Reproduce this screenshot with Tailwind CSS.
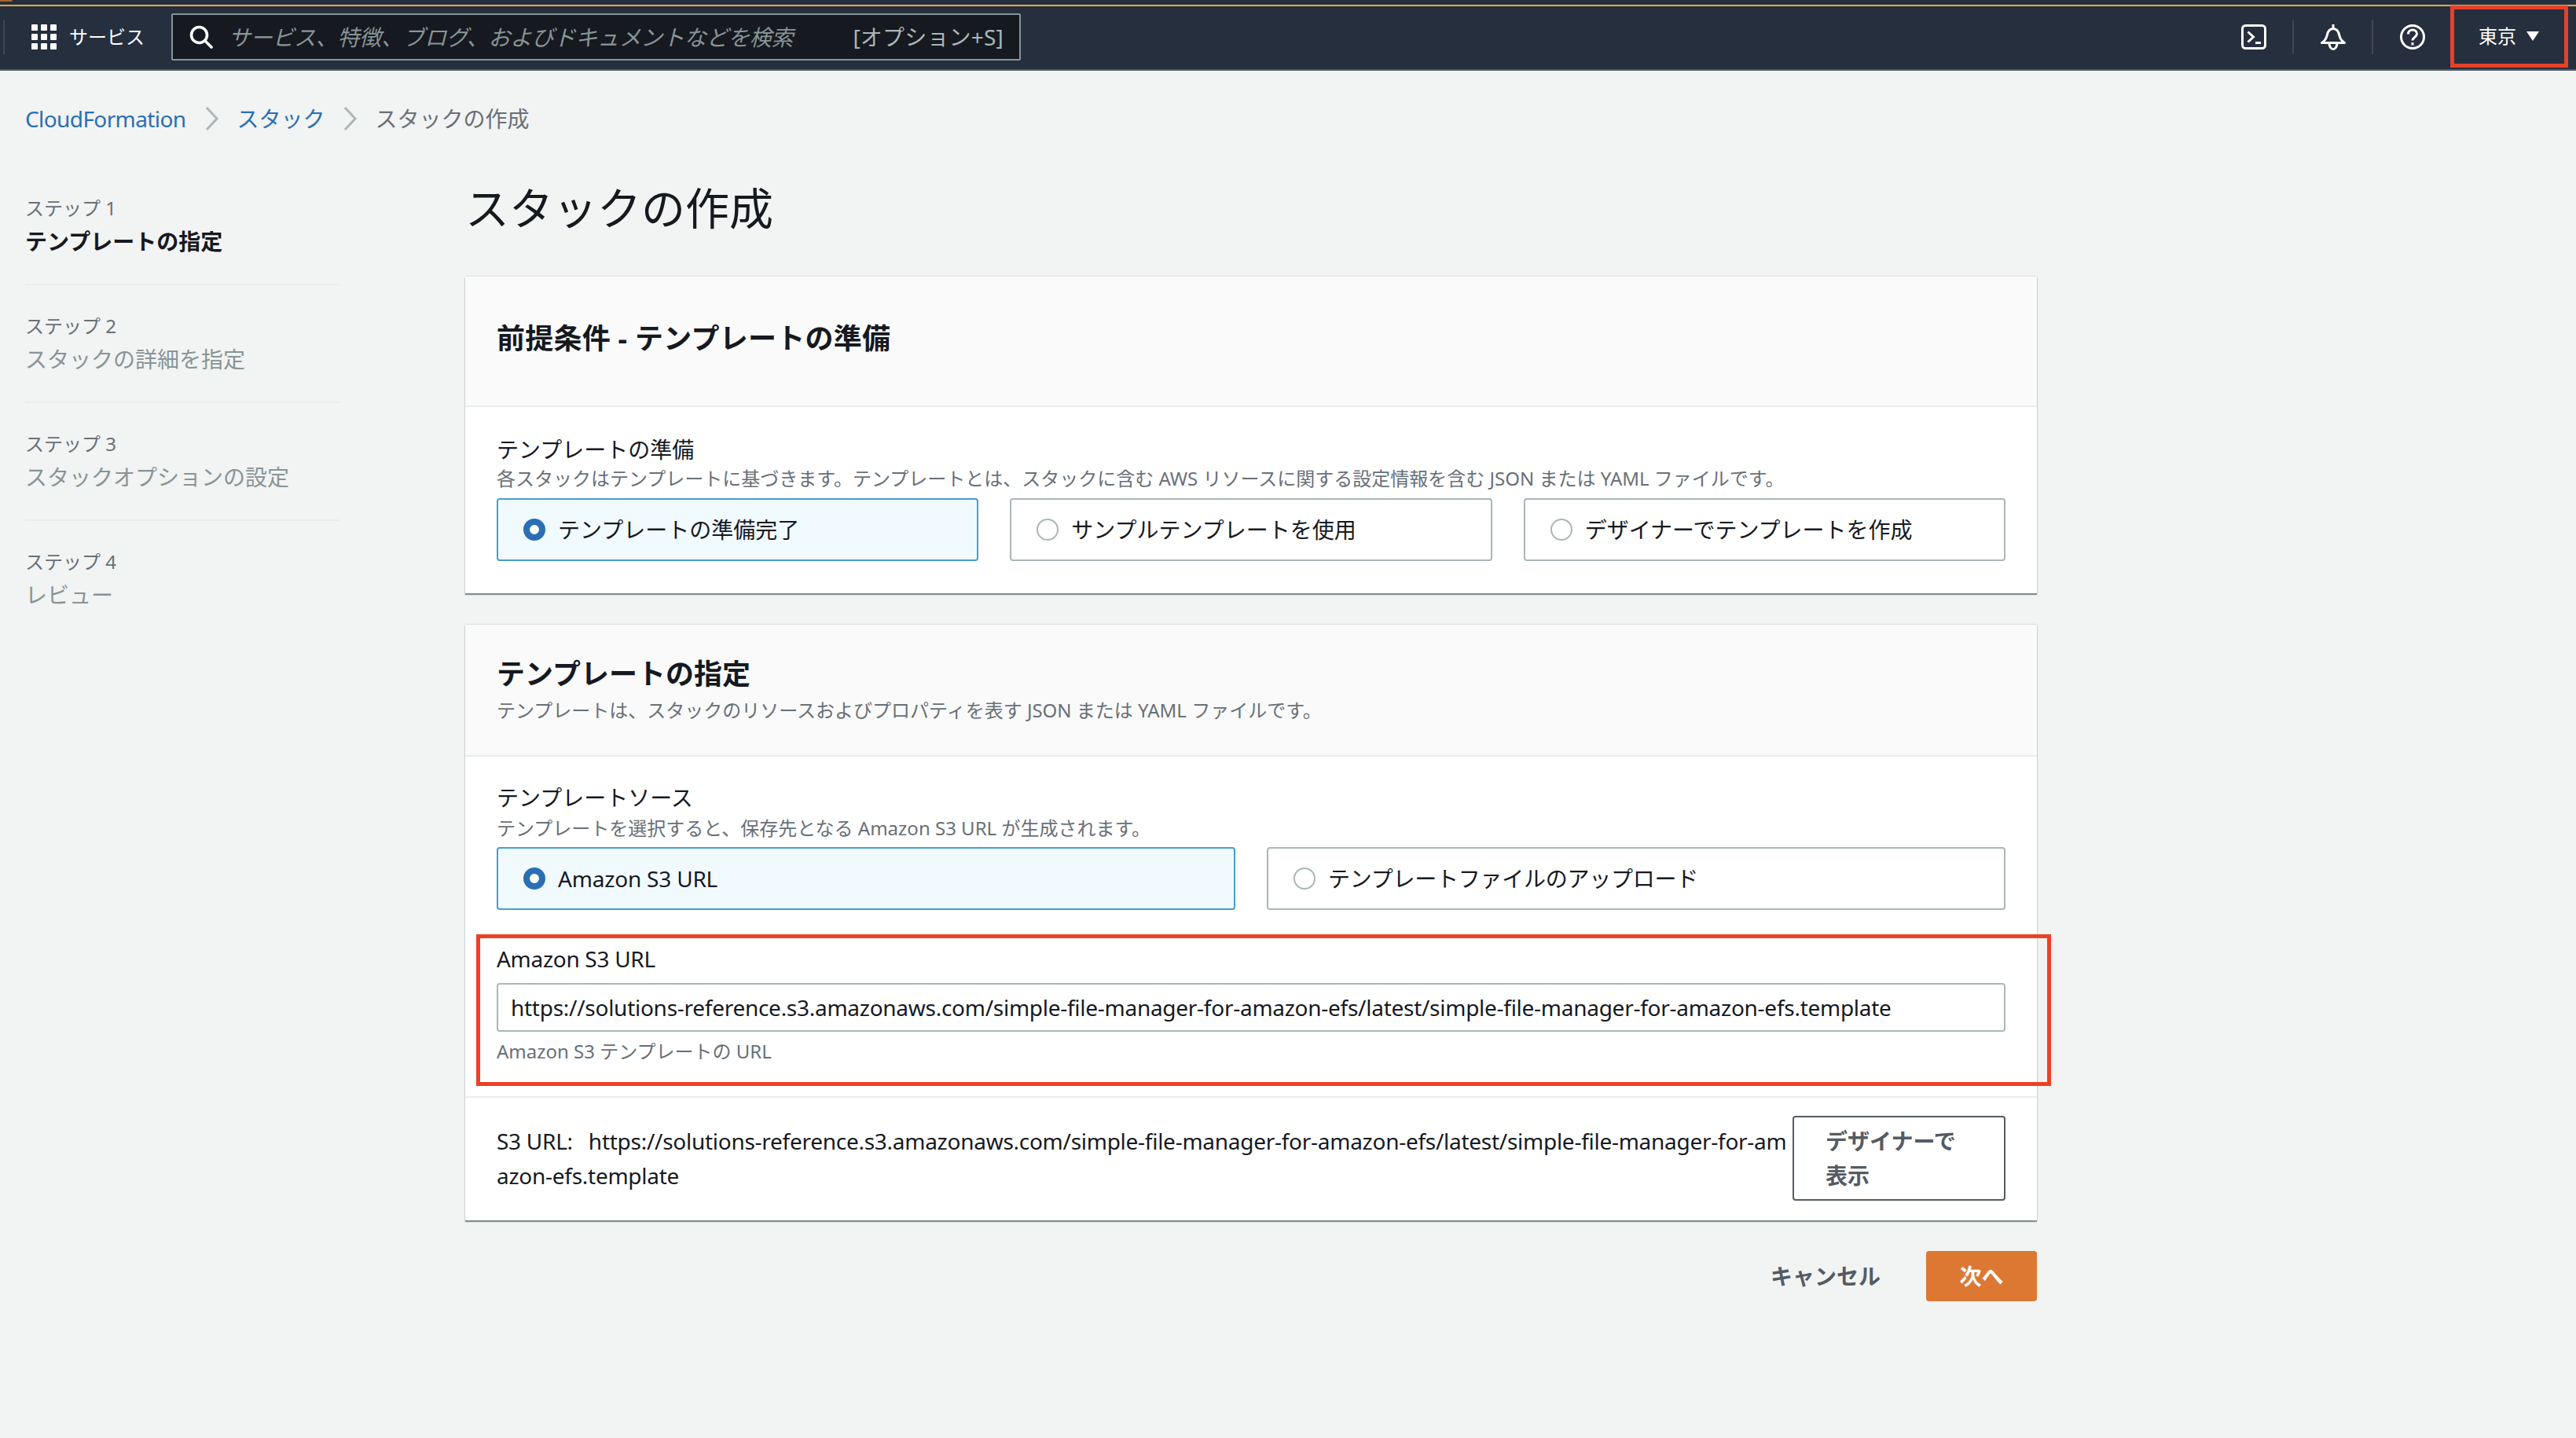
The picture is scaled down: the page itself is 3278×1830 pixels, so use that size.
<!DOCTYPE html>
<html lang="ja">
<head>
<meta charset="utf-8">
<title>スタックの作成</title>
<script src="https://cdn.jsdelivr.net/npm/@tailwindcss/browser@4"></script>
</head>
<body class="m-0 bg-[#f2f3f3] font-['Noto_Sans','Noto_Sans_CJK_JP',sans-serif] text-[#16191f] h-[1830px] w-[3278px] overflow-hidden">
<header class="relative">
  <div class="h-[6px] bg-[#232f3e]"></div>
  <div class="h-[2px] bg-[#f2a73b]"></div>
  <nav class="h-[82px] bg-[#252f3e] border-b-2 border-[#545b64] flex items-center pb-[2px] pl-[4px] pr-[192px]">
    <div class="w-[2px] h-[44px] bg-[#414750]"></div>
    <svg class="ml-[34px] w-[32px] h-[32px]" viewBox="0 0 32 32" fill="#fff">
      <rect x="0" y="0" width="8" height="8" rx="1"/><rect x="12" y="0" width="8" height="8" rx="1"/><rect x="24" y="0" width="8" height="8" rx="1"/>
      <rect x="0" y="12" width="8" height="8" rx="1"/><rect x="12" y="12" width="8" height="8" rx="1"/><rect x="24" y="12" width="8" height="8" rx="1"/>
      <rect x="0" y="24" width="8" height="8" rx="1"/><rect x="12" y="24" width="8" height="8" rx="1"/><rect x="24" y="24" width="8" height="8" rx="1"/>
    </svg>
    <span class="ml-[16px] text-[24px] leading-[32px] text-white">サービス</span>
    <div class="ml-[34px] w-[1081px] h-[60px] bg-[#16191f] border-2 border-[#879596] rounded-[2px] flex items-center pl-[21px] pr-[20px]">
      <svg class="w-[30px] h-[30px] shrink-0" viewBox="0 0 30 30" fill="none" stroke="#fff" stroke-width="3.6" stroke-linecap="round">
        <circle cx="12.5" cy="12.5" r="10"/><path d="M20 20l8 8"/>
      </svg>
      <span class="ml-[20px] italic text-[28px] leading-[36px] tracking-[-0.3px] text-[#879596] whitespace-nowrap">サービス、特徴、ブログ、およびドキュメントなどを検索</span>
      <span class="ml-auto text-[28px] leading-[36px] tracking-[0.2px] text-[#aab7b8] whitespace-nowrap">[オプション+S]</span>
    </div>
    <div class="ml-auto flex items-center">
      <svg class="w-[32px] h-[32px]" viewBox="0 0 32 32" fill="none" stroke="#fff" stroke-width="3">
        <rect x="1.5" y="1.5" width="29" height="29" rx="4"/><path d="M8.5 9.5l7 6.5-7 6.5" stroke-linejoin="miter"/><path d="M18 23.500h7"/>
      </svg>
      <div class="ml-[33px] w-[2px] h-[44px] bg-[#414750]"></div>
      <svg class="ml-[34px] w-[32px] h-[34px]" viewBox="0 0 32 34" fill="none" stroke="#fff" stroke-width="3" stroke-linejoin="round">
        <path d="M1.500 24.500c3-2 5.500-4.500 6.500-9 1-5 3-9 8-9s7 4 8 9c1 4.500 3.500 7 6.500 9z"/><path d="M16 1v5"/><path d="M11 25c0 4 2 7.500 5 7.500s5-3.500 5-7.500"/>
      </svg>
      <div class="ml-[33px] w-[2px] h-[44px] bg-[#414750]"></div>
      <svg class="ml-[34px] w-[32px] h-[32px]" viewBox="0 0 32 32" fill="none" stroke="#fff" stroke-width="3">
        <circle cx="16" cy="16" r="14.500"/><path d="M10.500 12.500c0-3.500 2.500-5.500 5.500-5.500s5.500 2 5.500 5c0 4.500-5.500 4.500-5.500 8.500"/><path d="M16 23v3.500"/>
      </svg>
    </div>
  </nav>
  <div class="absolute left-0 top-0 w-[16px] h-[2px] bg-[#a5632f] rounded-br-full"></div>
  <div class="absolute left-[3118px] top-[7px] w-[150px] h-[79px] border-[5px] border-[#e8402a]"></div>
  <div class="absolute left-[3154px] top-[28px] flex items-center text-white">
    <span class="text-[24px] leading-[36px]">東京</span>
    <span class="ml-[13px] w-0 h-0 border-x-[8px] border-x-transparent border-t-[12px] border-t-white"></span>
  </div>
</header>

<div class="ml-[32px] mt-[41px] h-[40px] flex items-center text-[28px] leading-[40px] whitespace-nowrap">
  <span class="text-[#2a6fb5] tracking-[-0.6px]">CloudFormation</span>
  <svg class="ml-[24px] w-[18px] h-[30px]" viewBox="0 0 18 30" fill="none" stroke="#aab7b8" stroke-width="3"><path d="M2 1l13 14-13 14"/></svg>
  <span class="ml-[23px] text-[#2a6fb5]">スタック</span>
  <svg class="ml-[23px] w-[18px] h-[30px]" viewBox="0 0 18 30" fill="none" stroke="#aab7b8" stroke-width="3"><path d="M2 1l13 14-13 14"/></svg>
  <span class="ml-[23px] text-[#687078]">スタックの作成</span>
</div>

<main class="flex mt-[58px] pl-[32px]">
  <aside class="w-[400px] shrink-0 pt-[18px] text-[#879596]">
    <div class="border-b-2 border-[#eaeded] pb-[32px] mb-[34px]">
      <div class="h-[36px] text-[24px] leading-[36px] text-[#687078]">ステップ 1</div>
      <div class="h-[44px] mt-[2px] text-[28px] leading-[44px] font-bold text-[#16191f]">テンプレートの指定</div>
    </div>
    <div class="border-b-2 border-[#eaeded] pb-[32px] mb-[34px]">
      <div class="h-[36px] text-[24px] leading-[36px] text-[#687078]">ステップ 2</div>
      <div class="h-[44px] mt-[2px] text-[28px] leading-[44px]">スタックの詳細を指定</div>
    </div>
    <div class="border-b-2 border-[#eaeded] pb-[32px] mb-[34px]">
      <div class="h-[36px] text-[24px] leading-[36px] text-[#687078]">ステップ 3</div>
      <div class="h-[44px] mt-[2px] text-[28px] leading-[44px]">スタックオプションの設定</div>
    </div>
    <div>
      <div class="h-[36px] text-[24px] leading-[36px] text-[#687078]">ステップ 4</div>
      <div class="h-[44px] mt-[2px] text-[28px] leading-[44px]">レビュー</div>
    </div>
  </aside>

  <section class="ml-[160px] w-[2000px] shrink-0">
    <h1 class="h-[72px] text-[56px] leading-[70px] font-normal">スタックの作成</h1>

    <div class="mt-[51px] bg-white shadow-[0_2px_1px_rgba(0,28,36,0.45),0_0_2px_rgba(0,28,36,0.25)]">
      <div class="h-[166px] bg-[#fafafa] border-b-2 border-[#eaeded] px-[40px] pt-[54px]">
        <h2 class="text-[36px] leading-[50px] font-bold tracking-[0.25px]">前提条件 - テンプレートの準備</h2>
      </div>
      <div class="px-[40px] pt-[36px] pb-[41px]">
        <div class="text-[28px] leading-[36px]">テンプレートの準備</div>
        <div class="mt-[3px] text-[24px] leading-[32px] text-[#687078]">各スタックはテンプレートに基づきます。テンプレートとは、スタックに含む AWS リソースに関する設定情報を含む JSON または YAML ファイルです。</div>
        <div class="mt-[9px] grid grid-cols-3 gap-[40px]">
          <div class="h-[80px] rounded-[4px] border-2 border-[#44a0cd] bg-[#f1faff] flex items-center pl-[32px] text-[28px]">
            <span class="w-[28px] h-[28px] rounded-full border-[8px] border-[#2a6fb5] bg-white shrink-0"></span>
            <span class="ml-[16px]">テンプレートの準備完了</span>
          </div>
          <div class="h-[80px] rounded-[4px] border-2 border-[#aab7b8] flex items-center pl-[32px] text-[28px]">
            <span class="w-[28px] h-[28px] rounded-full border-2 border-[#aab7b8] bg-white shrink-0"></span>
            <span class="ml-[16px]">サンプルテンプレートを使用</span>
          </div>
          <div class="h-[80px] rounded-[4px] border-2 border-[#aab7b8] flex items-center pl-[32px] text-[28px]">
            <span class="w-[28px] h-[28px] rounded-full border-2 border-[#aab7b8] bg-white shrink-0"></span>
            <span class="ml-[16px]">デザイナーでテンプレートを作成</span>
          </div>
        </div>
      </div>
    </div>

    <div class="relative mt-[40px] bg-white shadow-[0_2px_1px_rgba(0,28,36,0.45),0_0_2px_rgba(0,28,36,0.25)]">
      <div class="h-[168px] bg-[#fafafa] border-b-2 border-[#eaeded] px-[40px] pt-[38px]">
        <h2 class="text-[36px] leading-[50px] font-bold">テンプレートの指定</h2>
        <div class="mt-[5px] text-[24px] leading-[32px] text-[#687078]">テンプレートは、スタックのリソースおよびプロパティを表す JSON または YAML ファイルです。</div>
      </div>
      <div class="h-[434px] border-b-2 border-[#eaeded] px-[40px] pt-[34px]">
        <div class="text-[28px] leading-[36px]">テンプレートソース</div>
        <div class="mt-[5px] text-[24px] leading-[32px] text-[#687078]">テンプレートを選択すると、保存先となる Amazon S3 URL が生成されます。</div>
        <div class="mt-[8px] grid grid-cols-2 gap-[40px]">
          <div class="h-[80px] rounded-[4px] border-2 border-[#44a0cd] bg-[#f1faff] flex items-center pl-[32px] text-[28px]">
            <span class="w-[28px] h-[28px] rounded-full border-[8px] border-[#2a6fb5] bg-white shrink-0"></span>
            <span class="ml-[16px] tracking-[-0.2px]">Amazon S3 URL</span>
          </div>
          <div class="h-[80px] rounded-[4px] border-2 border-[#aab7b8] flex items-center pl-[32px] text-[28px]">
            <span class="w-[28px] h-[28px] rounded-full border-2 border-[#aab7b8] bg-white shrink-0"></span>
            <span class="ml-[16px] tracking-[-0.25px]">テンプレートファイルのアップロード</span>
          </div>
        </div>
        <div class="mt-[44px] text-[28px] leading-[36px] tracking-[-0.3px]">Amazon S3 URL</div>
        <div class="mt-[13px] h-[62px] rounded-[4px] border-2 border-[#aab7b8] flex items-center pl-[16px] text-[28px] tracking-[-0.27px] whitespace-nowrap">https://solutions-reference.s3.amazonaws.com/simple-file-manager-for-amazon-efs/latest/simple-file-manager-for-amazon-efs.template</div>
        <div class="mt-[9px] text-[24px] leading-[32px] text-[#687078]">Amazon S3 テンプレートの URL</div>
      </div>
      <div class="pl-[40px] pr-[40px] pt-[23px] pb-[25px] flex justify-between items-start">
        <div class="mt-[10px] text-[28px] leading-[44px] tracking-[-0.27px] whitespace-nowrap"><span>S3 URL:</span><span class="ml-[20px]">https://solutions-reference.s3.amazonaws.com/simple-file-manager-for-amazon-efs/latest/simple-file-manager-for-am</span><br>azon-efs.template</div>
        <div class="w-[271px] h-[108px] rounded-[4px] border-2 border-[#545b64] pl-[40px] py-[8px] text-[28px] leading-[44px] font-bold text-[#545b64] shrink-0">デザイナーで<br>表示</div>
      </div>
      <div class="absolute left-[14px] top-[394px] w-[2004px] h-[193px] border-[5px] border-[#ee4025]"></div>
    </div>

    <div class="mt-[39px] flex justify-end items-center">
      <span class="text-[28px] font-bold text-[#545b64]">キャンセル</span>
      <span class="ml-[58px] w-[141px] h-[64px] rounded-[4px] bg-[#dd7833] flex items-center justify-center text-[28px] font-bold text-white">次へ</span>
    </div>
  </section>
</main>
</body>
</html>
